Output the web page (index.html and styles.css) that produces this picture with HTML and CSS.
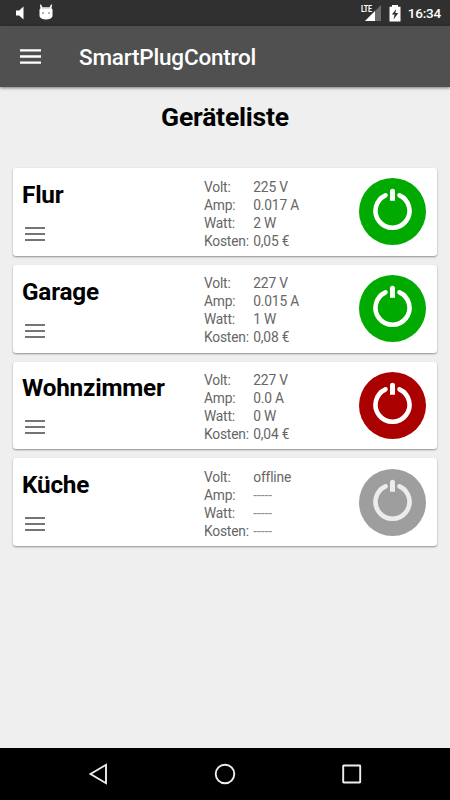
FILE: index.html
```html
<!DOCTYPE html>
<html lang="de">
<head>
  <meta charset="UTF-8" />
  <meta name="viewport" content="width=device-width, initial-scale=1.0" />
  <title>SmartPlugControl</title>
  <link rel="stylesheet" href="styles.css">
</head>
<body>
  <svg class="defs" width="0" height="0">
    <symbol id="menu" viewBox="0 0 20 14">
      <path d="M0 1h20M0 7h20M0 13h20" stroke="currentColor" stroke-width="2" />
    </symbol>
    <symbol id="power" viewBox="0 0 67 67">
      <circle cx="33.5" cy="33.5" r="33.5" />
      <path d="M26.5 17.3A17 17 0 1 0 40.5 17.3" fill="none" stroke="currentColor" stroke-width="4.6" stroke-linecap="round" />
      <path d="M31 22.8V13.2a2.5 2.5 0 0 1 5 0V22.8z" fill="currentColor" />
    </symbol>
  </svg>

  <div class="statusbar">
    <svg class="status-left" width="60" height="26" viewBox="0 0 60 26">
      <path d="M16 10.4h3.2l4.3-3.8v12.8l-4.3-3.9H16z" fill="#fff" />
      <path d="M39.5 9.5l1-1.2-.6-3.8 1 .1 1.6 2.6h7l1.6-2.6 1-.1-.6 3.8 1 1.2v6.8q-1.5 3.2-6.5 3.2t-6.5-3.2z" fill="#fff" />
      <path d="M42 8h8" stroke="#bbb" />
      <circle cx="43" cy="13" r=".8" fill="#555" />
      <circle cx="49" cy="13" r=".8" fill="#555" />
    </svg>
    <div class="status-right">
      <div class="signal">
        <span class="lte">LTE</span>
        <svg width="16" height="16" viewBox="0 0 16 16">
          <path d="M0 16L16 0v16z" fill="#6b6b6b" />
          <path d="M0 16L10 6v10z" fill="#fff" />
        </svg>
      </div>
      <svg class="battery" width="12" height="17" viewBox="0 0 12 17">
        <path d="M.5 1.8h2.5V0h6v1.8h2.5V16.5H.5z" fill="#fff" />
        <path d="M7.3 4L2.8 9.5h2.7L4.5 14.5 9.3 8H6.3z" fill="#303030" />
      </svg>
      <span class="clock">16:34</span>
    </div>
  </div>

  <div class="toolbar">
    <svg class="menu-main" viewBox="0 0 21 15"><path d="M0 1.3h21M0 7.5h21M0 13.7h21" /></svg>
    <span class="app-name">SmartPlugControl</span>
  </div>

  <div class="content">
    <h1>Geräteliste</h1>

    <div class="device">
      <div class="info">
        <h2>Flur</h2>
        <svg class="menu"><use href="#menu" /></svg>
      </div>
      <dl>
        <dt>Volt:</dt><dd>225 V</dd>
        <dt>Amp:</dt><dd>0.017 A</dd>
        <dt>Watt:</dt><dd>2 W</dd>
        <dt>Kosten:</dt><dd>0,05 €</dd>
      </dl>
      <svg class="power on"><use href="#power" /></svg>
    </div>

    <div class="device">
      <div class="info">
        <h2>Garage</h2>
        <svg class="menu"><use href="#menu" /></svg>
      </div>
      <dl>
        <dt>Volt:</dt><dd>227 V</dd>
        <dt>Amp:</dt><dd>0.015 A</dd>
        <dt>Watt:</dt><dd>1 W</dd>
        <dt>Kosten:</dt><dd>0,08 €</dd>
      </dl>
      <svg class="power on"><use href="#power" /></svg>
    </div>

    <div class="device">
      <div class="info">
        <h2>Wohnzimmer</h2>
        <svg class="menu"><use href="#menu" /></svg>
      </div>
      <dl>
        <dt>Volt:</dt><dd>227 V</dd>
        <dt>Amp:</dt><dd>0.0 A</dd>
        <dt>Watt:</dt><dd>0 W</dd>
        <dt>Kosten:</dt><dd>0,04 €</dd>
      </dl>
      <svg class="power off"><use href="#power" /></svg>
    </div>

    <div class="device">
      <div class="info">
        <h2>Küche</h2>
        <svg class="menu"><use href="#menu" /></svg>
      </div>
      <dl>
        <dt>Volt:</dt><dd>offline</dd>
        <dt>Amp:</dt><dd class="none">-----</dd>
        <dt>Watt:</dt><dd class="none">-----</dd>
        <dt>Kosten:</dt><dd class="none">-----</dd>
      </dl>
      <svg class="power offline"><use href="#power" /></svg>
    </div>
  </div>

  <div class="navbar">
    <svg width="24" height="24" viewBox="0 0 24 24"><path d="M4.5 12L20 2.8v18.4z" /></svg>
    <svg width="24" height="24" viewBox="0 0 24 24"><circle cx="12" cy="12" r="9.3" /></svg>
    <svg width="24" height="24" viewBox="0 0 24 24"><rect x="3.2" y="3.5" width="17" height="17" rx=".5" /></svg>
  </div>
</body>
</html>
```

FILE: styles.css
```css
* { box-sizing: border-box; }
body { margin: 0; height: 800px; display: flex; flex-direction: column; overflow: hidden; font-family: Roboto, sans-serif; background: #efefef; }
h1, h2, dl, dd { margin: 0; }
svg { display: block; flex: none; }
.defs { position: absolute; }

.statusbar { height: 26px; flex: none; display: flex; justify-content: space-between; background: #303030; color: #fff; }
.status-right { display: flex; padding-right: 9px; }
.signal { position: relative; width: 20px; height: 21px; padding: 5px 0 0 4px; }
.lte { position: absolute; left: 0; top: 4px; font-size: 9.5px; line-height: 9px; font-weight: bold; letter-spacing: -0.3px; transform: scaleX(.75); transform-origin: left; background: #303030; }
.battery { margin: 5px 0 0 8px; }
.clock { margin-left: 7px; font-size: 13.5px; line-height: 27px; font-weight: 500; letter-spacing: -0.2px; }

.toolbar { height: 61px; flex: none; display: flex; align-items: center; padding-left: 20px; background: #505050; color: #fff; box-shadow: 0 1px 3px rgba(0, 0, 0, .5); }
.menu-main { width: 21px; height: 15px; stroke: #fff; stroke-width: 2.3; }
.app-name { margin: 0 0 0 38px; font-size: 22.5px; font-weight: 500; letter-spacing: -0.2px; }

.content { flex: 1; padding: 13px 13px 0; }
h1 { height: 68.3px; font-size: 26.5px; line-height: 34px; text-align: center; letter-spacing: -0.2px; }
.device { display: flex; height: 87.7px; margin-bottom: 9px; padding: 10px 11px 0 9px; background: #fff; border-radius: 3px; box-shadow: 0 1px 2px rgba(0, 0, 0, .4); }
.info { width: 182px; margin-top: -0.3px; }
h2 { height: 49px; font-size: 24.3px; line-height: 34px; letter-spacing: -0.2px; }
.menu { width: 20px; height: 14px; margin-left: 3px; color: #757575; }
dl { display: grid; grid-template-columns: 49.3px 1fr; grid-auto-rows: 18px; flex: 1; margin-top: -0.7px; font-size: 13.8px; line-height: 18px; letter-spacing: -0.2px; color: #666; }
.none { color: #909090; letter-spacing: -0.1px; }
.power { width: 67px; height: 67px; margin: .2px -0.3px 0 0; color: #fff; }
.on { fill: #00aa00; }
.off { fill: #aa0000; }
.offline { fill: #9e9e9e; color: #ececec; }

.navbar { height: 52px; flex: none; display: flex; justify-content: space-between; align-items: center; padding: 0 86px; background: #000; }
.navbar svg { fill: none; stroke: #eee; stroke-width: 1.9; }
```
